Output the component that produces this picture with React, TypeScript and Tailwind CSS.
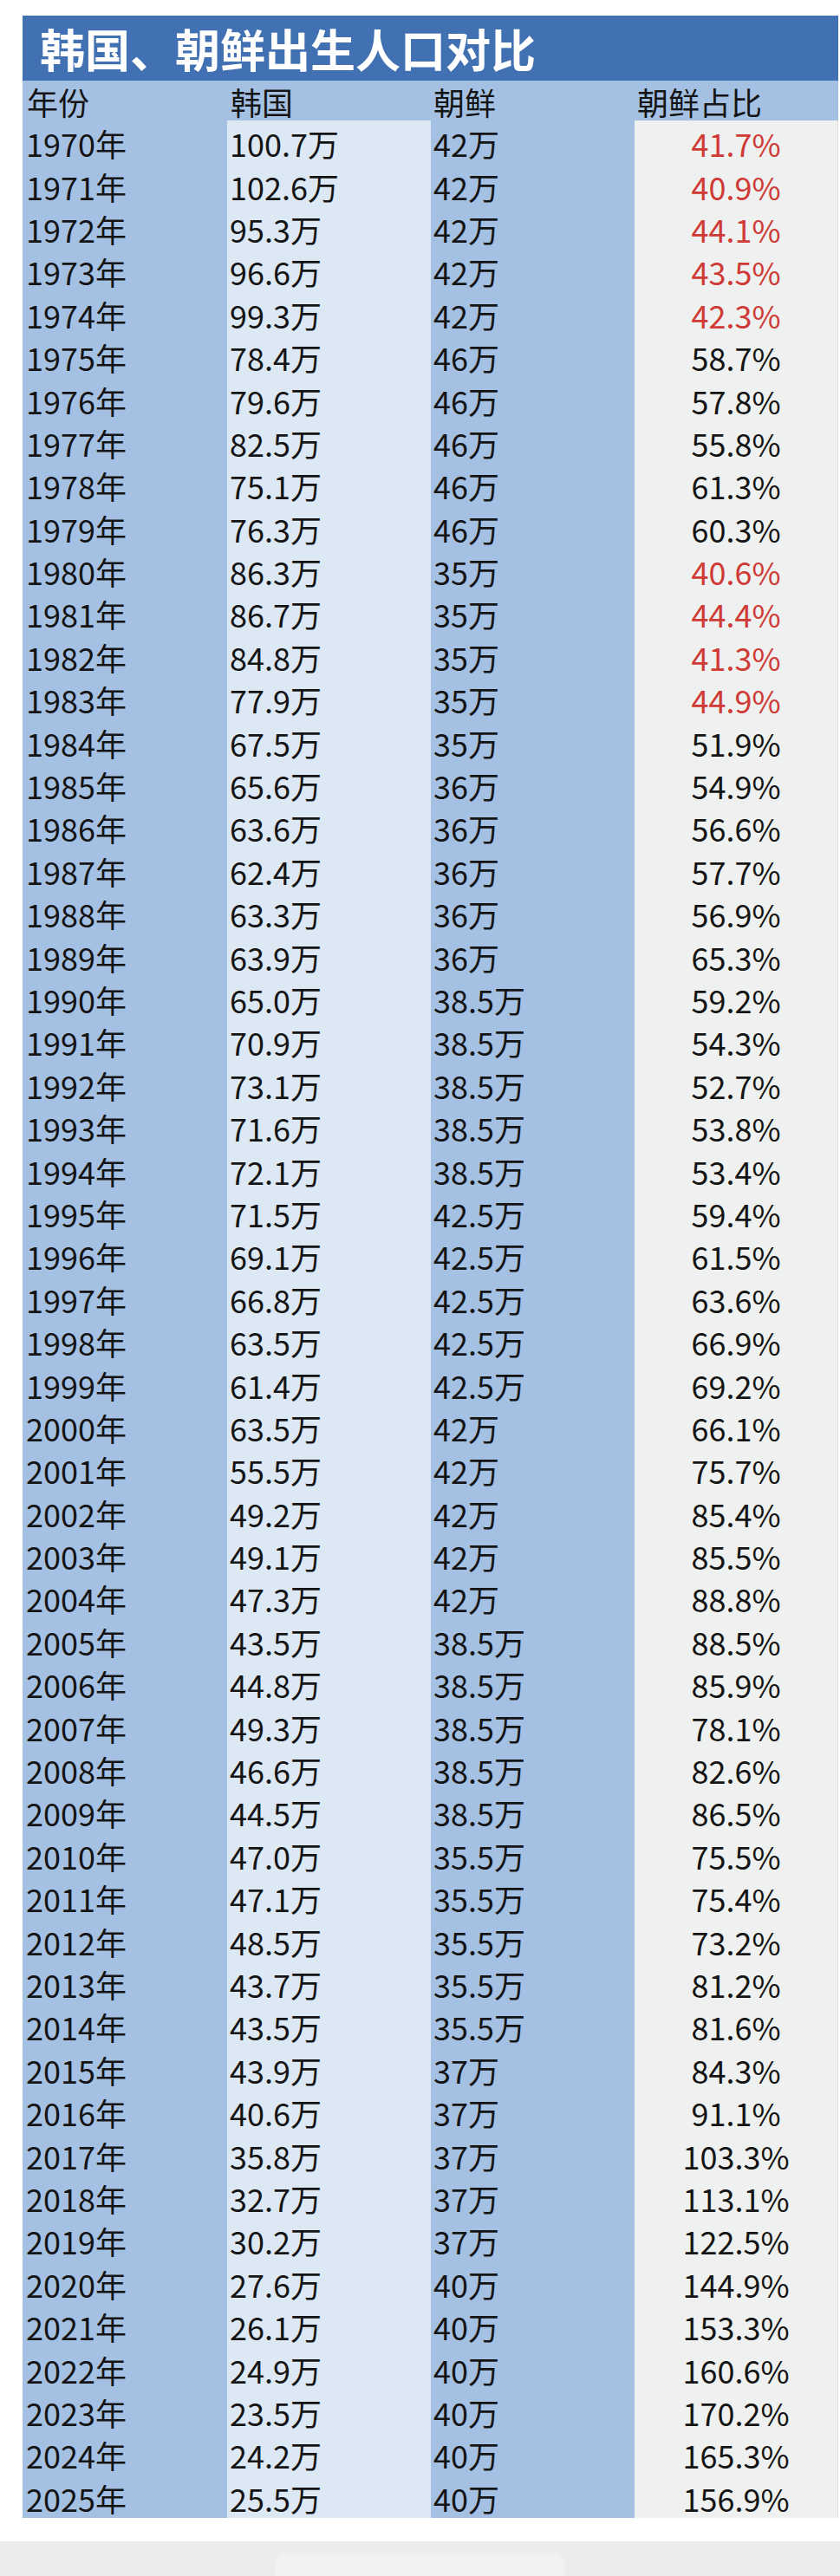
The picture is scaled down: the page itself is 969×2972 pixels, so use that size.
const rows: [string, string, string, string, boolean][] = [
  ["1970", "100.7", "42", "41.7", true],
  ["1971", "102.6", "42", "40.9", true],
  ["1972", "95.3", "42", "44.1", true],
  ["1973", "96.6", "42", "43.5", true],
  ["1974", "99.3", "42", "42.3", true],
  ["1975", "78.4", "46", "58.7", false],
  ["1976", "79.6", "46", "57.8", false],
  ["1977", "82.5", "46", "55.8", false],
  ["1978", "75.1", "46", "61.3", false],
  ["1979", "76.3", "46", "60.3", false],
  ["1980", "86.3", "35", "40.6", true],
  ["1981", "86.7", "35", "44.4", true],
  ["1982", "84.8", "35", "41.3", true],
  ["1983", "77.9", "35", "44.9", true],
  ["1984", "67.5", "35", "51.9", false],
  ["1985", "65.6", "36", "54.9", false],
  ["1986", "63.6", "36", "56.6", false],
  ["1987", "62.4", "36", "57.7", false],
  ["1988", "63.3", "36", "56.9", false],
  ["1989", "63.9", "36", "65.3", false],
  ["1990", "65.0", "38.5", "59.2", false],
  ["1991", "70.9", "38.5", "54.3", false],
  ["1992", "73.1", "38.5", "52.7", false],
  ["1993", "71.6", "38.5", "53.8", false],
  ["1994", "72.1", "38.5", "53.4", false],
  ["1995", "71.5", "42.5", "59.4", false],
  ["1996", "69.1", "42.5", "61.5", false],
  ["1997", "66.8", "42.5", "63.6", false],
  ["1998", "63.5", "42.5", "66.9", false],
  ["1999", "61.4", "42.5", "69.2", false],
  ["2000", "63.5", "42", "66.1", false],
  ["2001", "55.5", "42", "75.7", false],
  ["2002", "49.2", "42", "85.4", false],
  ["2003", "49.1", "42", "85.5", false],
  ["2004", "47.3", "42", "88.8", false],
  ["2005", "43.5", "38.5", "88.5", false],
  ["2006", "44.8", "38.5", "85.9", false],
  ["2007", "49.3", "38.5", "78.1", false],
  ["2008", "46.6", "38.5", "82.6", false],
  ["2009", "44.5", "38.5", "86.5", false],
  ["2010", "47.0", "35.5", "75.5", false],
  ["2011", "47.1", "35.5", "75.4", false],
  ["2012", "48.5", "35.5", "73.2", false],
  ["2013", "43.7", "35.5", "81.2", false],
  ["2014", "43.5", "35.5", "81.6", false],
  ["2015", "43.9", "37", "84.3", false],
  ["2016", "40.6", "37", "91.1", false],
  ["2017", "35.8", "37", "103.3", false],
  ["2018", "32.7", "37", "113.1", false],
  ["2019", "30.2", "37", "122.5", false],
  ["2020", "27.6", "40", "144.9", false],
  ["2021", "26.1", "40", "153.3", false],
  ["2022", "24.9", "40", "160.6", false],
  ["2023", "23.5", "40", "170.2", false],
  ["2024", "24.2", "40", "165.3", false],
  ["2025", "25.5", "40", "156.9", false],
]

export default function App() {
  return (
    <div className="w-[969px] bg-white font-['Noto_Sans_CJK_SC',sans-serif] text-[#141414]">
      <div className="pt-[18px] pl-[26px]">
        <div className="w-[941px]">
          <div className="flex h-[75px] items-center bg-[#4271b3] pl-[20px] text-[52px] font-bold leading-none text-white">
            韩国、朝鲜出生人口对比
          </div>

          <div className="grid h-[46px] grid-cols-[236px_235px_235px_235px] items-center bg-[#a4c1e4] pt-[2px] text-[36px] leading-none">
            <div className="pl-[5px]">年份</div>
            <div className="pl-[4px]">韩国</div>
            <div className="pl-[3px]">朝鲜</div>
            <div className="pl-[3px]">朝鲜占比</div>
          </div>

          <div className="grid grid-cols-[236px_235px_235px_235px] text-[36px] leading-none">
            {rows.map(([year, kr, nk, pct, red]) => (
              <div key={year} className="contents">
                <div className="flex h-[49.4px] items-center bg-[#a4c1e4] pt-[3px] pl-[4px]">{year}年</div>
                <div className="flex h-[49.4px] items-center bg-[#dde8f5] pt-[3px] pl-[3px]">{kr}万</div>
                <div className="flex h-[49.4px] items-center bg-[#a4c1e4] pt-[3px] pl-[3px]">{nk}万</div>
                <div
                  className={
                    "flex h-[49.4px] items-center justify-center border-r border-[#dfe4e0] bg-[#eef1ef] pt-[3px] " +
                    (red ? "text-[#cf3a36]" : "")
                  }
                >
                  {pct}%
                </div>
              </div>
            ))}
          </div>
        </div>
      </div>

      <div className="h-[27px]" />
      <div className="flex h-[40px] justify-center bg-[#ececec] pt-[13px]">
        <div className="h-[27px] w-[335px] rounded-t-[14px] bg-[#f1f1f1]" />
      </div>
    </div>
  )
}
